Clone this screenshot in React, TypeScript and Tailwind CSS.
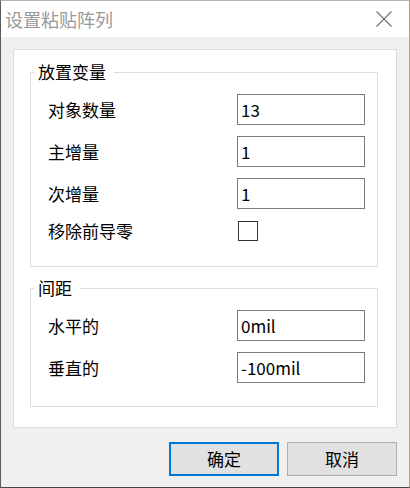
const font = { fontFamily: '"Noto Sans CJK SC", "Noto Sans", sans-serif' };

function Row({ label, value }: { label: string; value: string }) {
  return (
    <div className="grid h-[31px] grid-cols-[189px_128px] items-center">
      <span className="text-[17px] leading-[20px] text-black">{label}</span>
      <input
        readOnly
        defaultValue={value}
        className="h-[31px] w-[128px] border border-[#7a7a7a] bg-white px-[3px] text-[17px] text-black outline-none"
      />
    </div>
  );
}

function Group({ title, children, pb }: { title: string; children: React.ReactNode; pb: string }) {
  return (
    <fieldset className="border border-[#dcdcdc]">
      <legend className="ml-[3px] pl-[4px] pr-[8px] text-[17px] leading-[20px] text-black">{title}</legend>
      <div className={`flex flex-col gap-[11px] pl-[17px] pr-[12px] pt-[12px] ${pb}`}>{children}</div>
    </fieldset>
  );
}

export default function App() {
  return (
    <div
      className="flex h-[488px] w-[410px] flex-col border-t border-t-[#b4b4b4] border-l border-l-[#5c5c5c] border-r border-r-[#a6a47a] border-b border-b-[#474747] bg-[#f0f0f0]"
      style={font}
    >
      <div className="flex h-[36px] shrink-0 items-center justify-between bg-white pl-[4px] pr-[17px]">
        <span className="text-[18px] leading-[22px] text-[#9a9a9a]">设置粘贴阵列</span>
        <svg width="16" height="16" viewBox="0 0 16 16" className="text-[#707070]">
          <path d="M0.5 0.5 L15.5 15.5 M15.5 0.5 L0.5 15.5" stroke="currentColor" strokeWidth="1.1" fill="none" />
        </svg>
      </div>

      <div className="flex flex-col px-[12px] pt-[12px]">
        <div className="flex h-[379px] flex-col border border-[#dcdcdc] bg-white pl-[16px] pr-[18px] pt-[12px]">
          <Group title="放置变量" pb="pb-[25px]">
            <Row label="对象数量" value="13" />
            <Row label="主增量" value="1" />
            <Row label="次增量" value="1" />
            <div className="mt-[1px] grid h-[20px] grid-cols-[189px_128px] items-center">
              <span className="text-[17px] leading-[20px] text-black">移除前导零</span>
              <div className="ml-[1px] h-[20px] w-[20px] border border-[#333333] bg-white" />
            </div>
          </Group>
          <div className="mt-[11px]">
            <Group title="间距" pb="pb-[23px]">
              <Row label="水平的" value="0mil" />
              <Row label="垂直的" value="-100mil" />
            </Group>
          </div>
        </div>

        <div className="mt-[14px] flex justify-end gap-[8px]">
          <button className="h-[34px] w-[110px] border-2 border-[#0078d7] bg-[#e1e1e1] text-[17px] text-black">
            确定
          </button>
          <button className="h-[34px] w-[110px] border border-[#adadad] bg-[#e1e1e1] text-[17px] text-black">
            取消
          </button>
        </div>
      </div>
    </div>
  );
}
